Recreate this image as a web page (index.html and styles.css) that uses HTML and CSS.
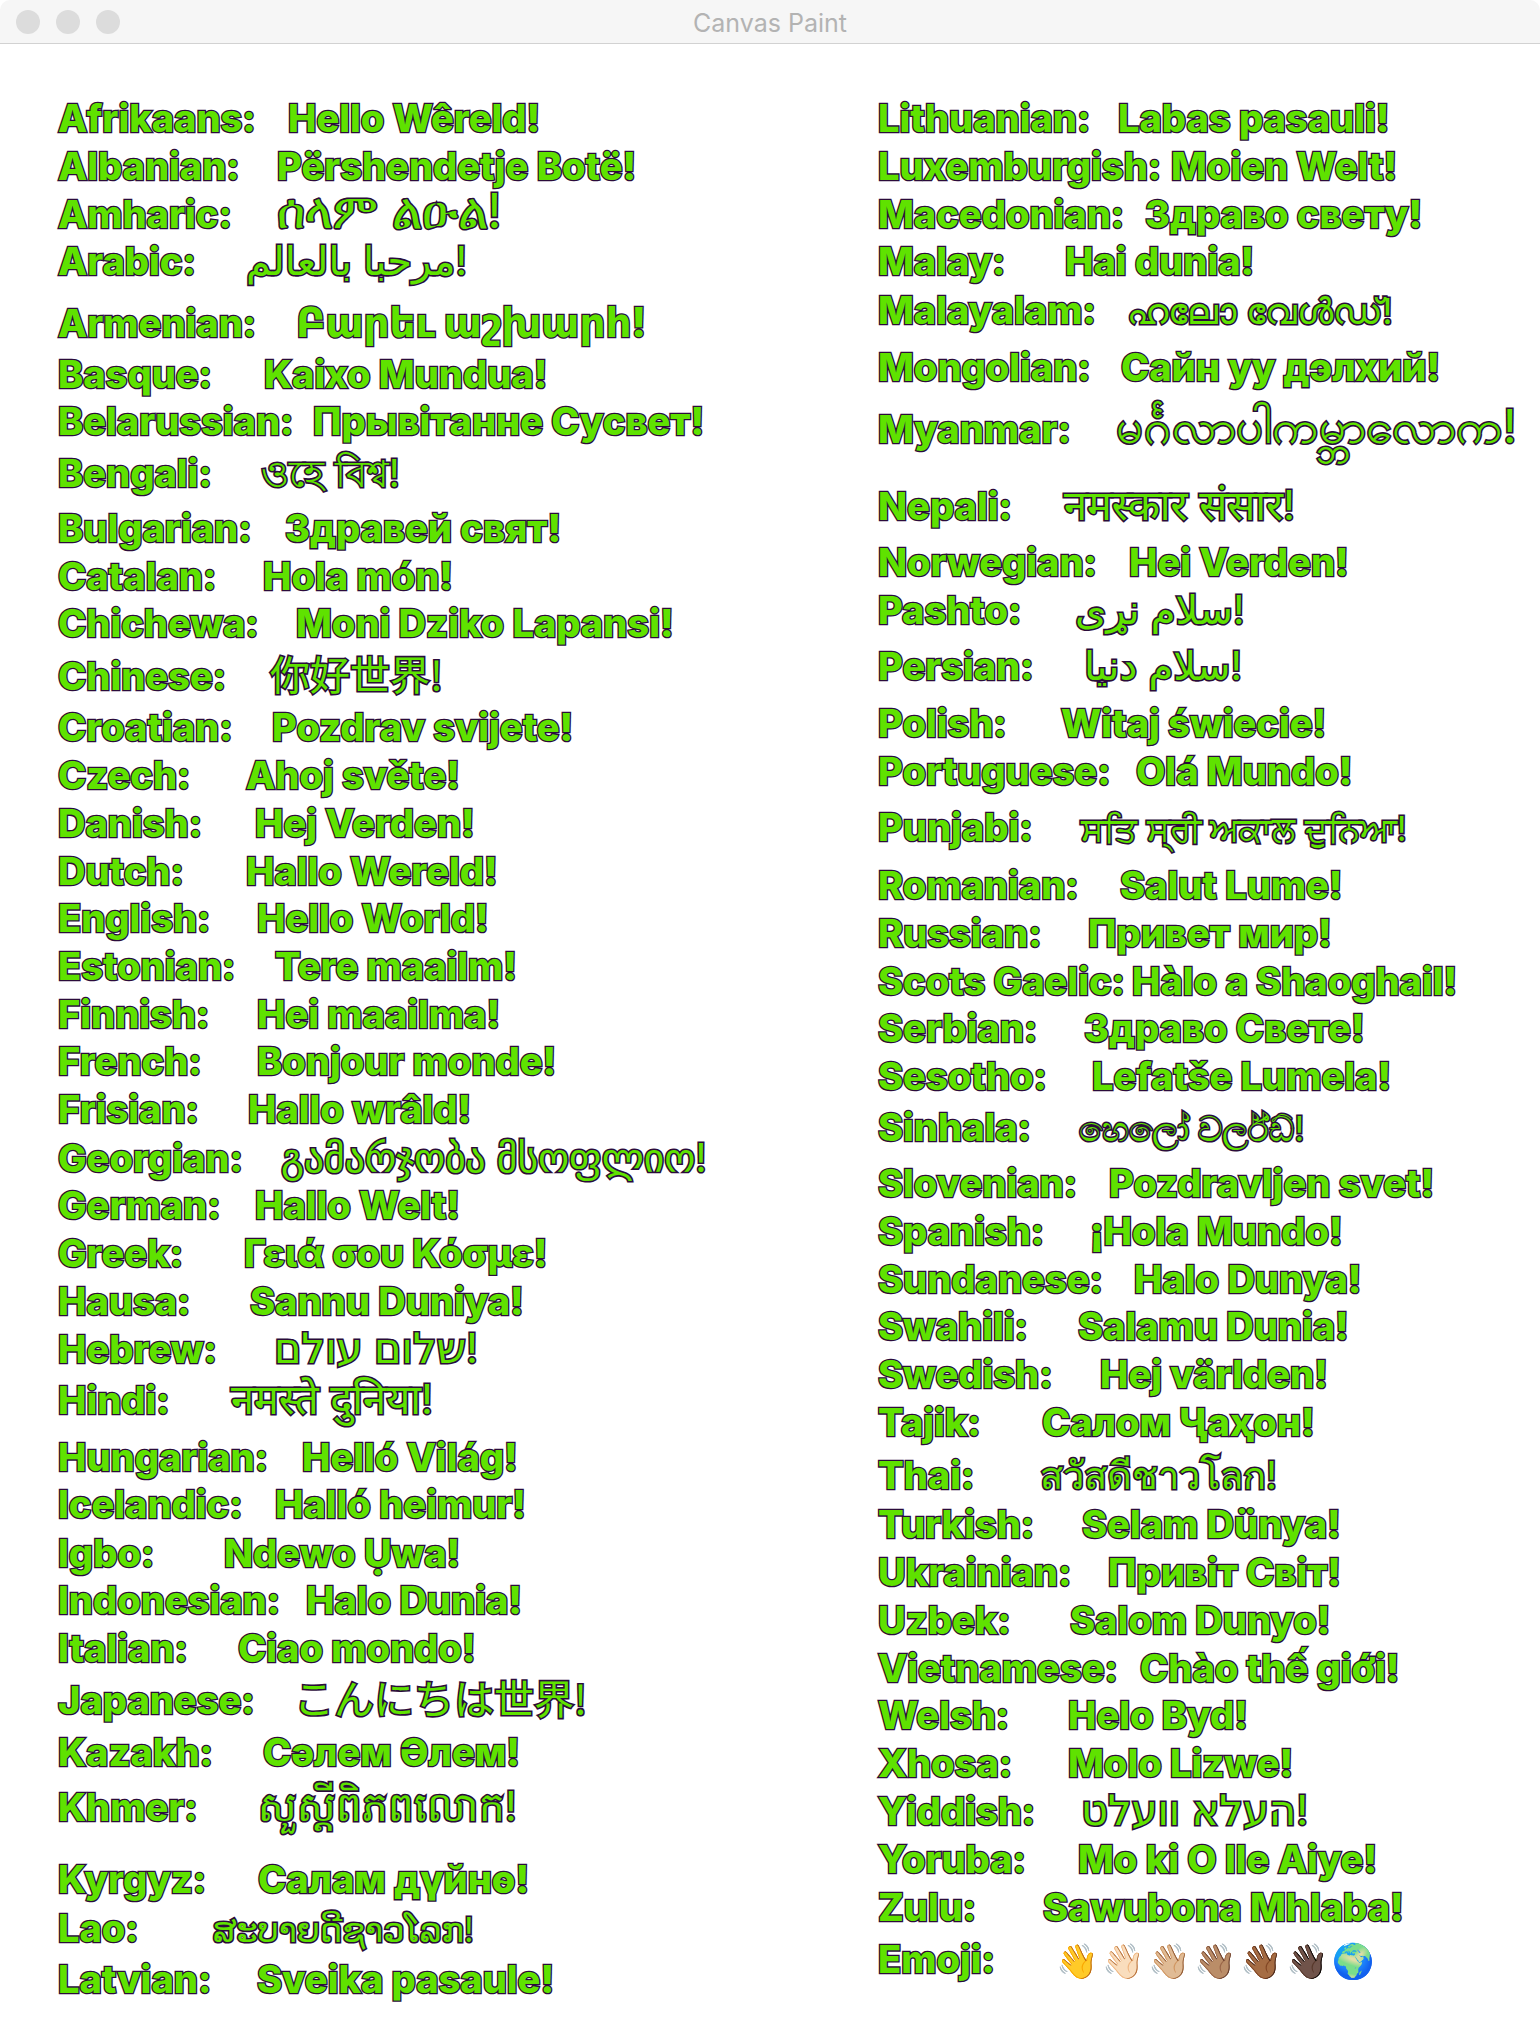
FILE: index.html
```html
<!DOCTYPE html>
<html lang="en">
<head>
<meta charset="utf-8">
<title>Canvas Paint</title>
<link rel="stylesheet" href="styles.css">
</head>
<body>
<header class="bar">
  <div class="lights"><i></i><i></i><i></i></div>
  <div class="title">Canvas Paint</div>
</header>
<main class="cols">
<div class="col">
<p class="h48"><b class="w230">Afrikaans:</b>Hello Wêreld!</p>
<p class="h48"><b class="w219">Albanian:</b>Përshendetje Botë!</p>
<p class="h47"><b class="w219">Amharic:</b><span class="am">ሰላም ልዑል!</span></p>
<p class="h62"><b class="w188">Arabic:</b><span class="ar">مرحبا بالعالم!</span></p>
<p class="h51"><b class="w238">Armenian:</b><span class="hy">Բարեւ աշխարհ!</span></p>
<p class="h47"><b class="w206">Basque:</b>Kaixo Mundua!</p>
<p class="h52"><b class="w255">Belarussian:</b>Прывітанне Сусвет!</p>
<p class="h55"><b class="w203">Bengali:</b><span class="bn">ওহে বিশ্ব!</span></p>
<p class="h48"><b class="w227">Bulgarian:</b>Здравей свят!</p>
<p class="h47"><b class="w205">Catalan:</b>Hola món!</p>
<p class="h53"><b class="w238">Chichewa:</b>Moni Dziko Lapansi!</p>
<p class="h51"><b class="w212">Chinese:</b><span class="zh">你好世界!</span></p>
<p class="h48"><b class="w214">Croatian:</b>Pozdrav svijete!</p>
<p class="h48"><b class="w188">Czech:</b>Ahoj světe!</p>
<p class="h48"><b class="w197">Danish:</b>Hej Verden!</p>
<p class="h47"><b class="w188">Dutch:</b>Hallo Wereld!</p>
<p class="h48"><b class="w199">English:</b>Hello World!</p>
<p class="h48"><b class="w217">Estonian:</b>Tere maailm!</p>
<p class="h47"><b class="w199">Finnish:</b>Hei maailma!</p>
<p class="h48"><b class="w199">French:</b>Bonjour monde!</p>
<p class="h49"><b class="w190">Frisian:</b>Hallo wrâld!</p>
<p class="h47"><b class="w223">Georgian:</b><span class="ka">გამარჯობა მსოფლიო!</span></p>
<p class="h48"><b class="w197">German:</b>Hallo Welt!</p>
<p class="h48"><b class="w186">Greek:</b>Γειά σου Κόσμε!</p>
<p class="h48"><b class="w192">Hausa:</b>Sannu Duniya!</p>
<p class="h51"><b class="w216">Hebrew:</b><span class="he">שלום עולם!</span></p>
<p class="h57"><b class="w173">Hindi:</b><span class="hi">नमस्ते दुनिया!</span></p>
<p class="h47"><b class="w244">Hungarian:</b>Helló Világ!</p>
<p class="h49"><b class="w217">Icelandic:</b>Halló heimur!</p>
<p class="h47"><b class="w166">Igbo:</b>Ndewo Ụwa!</p>
<p class="h48"><b class="w248">Indonesian:</b>Halo Dunia!</p>
<p class="h52"><b class="w180">Italian:</b>Ciao mondo!</p>
<p class="h52"><b class="w236">Japanese:</b><span class="zh">こんにちは世界!</span></p>
<p class="h55"><b class="w205">Kazakh:</b>Сәлем Әлем!</p>
<p class="h72"><b class="w200">Khmer:</b><span class="km">សួស្តីពិភពលោក!</span></p>
<p class="h49"><b class="w200">Kyrgyz:</b>Салам дүйнө!</p>
<p class="h51"><b class="w155">Lao:</b><span class="lo">ສະບາຍດີຊາວໂລກ!</span></p>
<p class="h48"><b class="w199">Latvian:</b>Sveika pasaule!</p>
</div>
<div class="col">
<p class="h48"><b class="w240">Lithuanian:</b>Labas pasauli!</p>
<p class="h48"><b class="w293">Luxemburgish:</b>Moien Welt!</p>
<p class="h47"><b class="w267">Macedonian:</b>Здраво свету!</p>
<p class="h49"><b class="w187">Malay:</b>Hai dunia!</p>
<p class="h57"><b class="w249">Malayalam:</b><span class="ml">ഹലോ വേൾഡ്!</span></p>
<p class="h62"><b class="w243">Mongolian:</b>Сайн уу дэлхий!</p>
<p class="h77"><b class="w238">Myanmar:</b><span class="my">မင်္ဂလာပါကမ္ဘာလောက!</span></p>
<p class="h56"><b class="w186">Nepali:</b><span class="hi">नमस्कार संसार!</span></p>
<p class="h48"><b class="w251">Norwegian:</b>Hei Verden!</p>
<p class="h56"><b class="w197">Pashto:</b><span class="ar">سلام نړی!</span></p>
<p class="h57"><b class="w206">Persian:</b><span class="ar">سلام دنیا!</span></p>
<p class="h48"><b class="w183">Polish:</b>Witaj świecie!</p>
<p class="h56"><b class="w258">Portuguese:</b>Olá Mundo!</p>
<p class="h58"><b class="w203">Punjabi:</b><span class="pa">ਸਤਿ ਸ੍ਰੀ ਅਕਾਲ ਦੁਨਿਆ!</span></p>
<p class="h48"><b class="w242">Romanian:</b>Salut Lume!</p>
<p class="h48"><b class="w210">Russian:</b>Привет мир!</p>
<p class="h47"><b class="w254">Scots Gaelic:</b>Hàlo a Shaoghail!</p>
<p class="h48"><b class="w206">Serbian:</b>Здраво Свете!</p>
<p class="h51"><b class="w214">Sesotho:</b>Lefatše Lumela!</p>
<p class="h56"><b class="w201">Sinhala:</b><span class="si">හෙලෝ වර්ල්ඩ්!</span></p>
<p class="h48"><b class="w231">Slovenian:</b>Pozdravljen svet!</p>
<p class="h48"><b class="w212">Spanish:</b>¡Hola Mundo!</p>
<p class="h47"><b class="w256">Sundanese:</b>Halo Dunya!</p>
<p class="h48"><b class="w200">Swahili:</b>Salamu Dunia!</p>
<p class="h48"><b class="w222">Swedish:</b>Hej världen!</p>
<p class="h53"><b class="w164">Tajik:</b>Салом Ҷаҳон!</p>
<p class="h49"><b class="w162">Thai:</b><span class="th">สวัสดีชาวโลก!</span></p>
<p class="h48"><b class="w204">Turkish:</b>Selam Dünya!</p>
<p class="h48"><b class="w230">Ukrainian:</b>Привіт Світ!</p>
<p class="h48"><b class="w192">Uzbek:</b>Salom Dunyo!</p>
<p class="h47"><b class="w262">Vietnamese:</b>Chào thế giới!</p>
<p class="h48"><b class="w190">Welsh:</b>Helo Byd!</p>
<p class="h48"><b class="w190">Xhosa:</b>Molo Lizwe!</p>
<p class="h48"><b class="w203">Yiddish:</b><span class="he">העלא וועלט!</span></p>
<p class="h48"><b class="w200">Yoruba:</b>Mo ki O Ile Aiye!</p>
<p class="h52"><b class="w165">Zulu:</b>Sawubona Mhlaba!</p>
<p class="h48"><b class="w178">Emoji:</b><span class="emoji">👋👋🏻👋🏼👋🏽👋🏾👋🏿🌍</span></p>
</div>
</main>
</body>
</html>
```
FILE: styles.css
```css
html, body { margin: 0; padding: 0; background: #fff; }
body { width: 1540px; height: 2036px; overflow: hidden; }
.bar {
  height: 40px;
  padding-top: 3px;
  background: #f6f6f6;
  border-bottom: 1px solid #d2d2d2;
  border-radius: 10px 10px 0 0;
  display: flex;
  align-items: center;
  justify-content: center;
  position: relative;
}
.lights { position: absolute; left: 16px; top: 10px; display: flex; gap: 16px; }
.lights i { width: 24px; height: 24px; border-radius: 50%; background: #dcdcdc; display: block; }
.title { font: 400 25px Inter, sans-serif; color: #b3b3b3; }
.cols { display: flex; padding: 50px 0 0 58px; }
.col { flex: none; width: 820px; }
.col + .col { width: 662px; }
.col p {
  margin: 0;
  white-space: pre;
  font: 800 38px/48px Inter, "Noto Sans", "DejaVu Sans", "Noto Sans CJK SC", sans-serif;
  color: #5fe200;
  -webkit-text-stroke: 2.6px #2b0b3b;
  paint-order: stroke fill;
}
.col b { display: inline-block; font-weight: inherit; }
.col span { line-height: 0; }
.am, .ar, .bn, .zh, .ka, .he, .hi, .km, .lo, .ml, .my, .pa, .si, .th {
  font-weight: 400;
  -webkit-text-stroke-width: 3.2px;
}
.am { font-size: 48px; }
.ar { font-size: 40px; }
.hy { font-size: 40.5px; }
.bn { font-size: 38px; }
.ka { font-size: 39.5px; }
.he { font-size: 41.5px; }
.hi { font-size: 41.5px; }
.zh { font-family: "Noto Sans CJK SC", sans-serif; font-size: 40px; }
.km { font-size: 40.5px; }
.lo { font-size: 33.5px; }
.ml { font-size: 36px; }
.my { font-size: 47px; }
.pa { font-size: 34px; }
.si { font-size: 33.7px; }
.th { font-size: 38px; }
.emoji { font-size: 34px; letter-spacing: 4px; }

.h47 { height: 47px; }
.h48 { height: 48px; }
.h49 { height: 49px; }
.h51 { height: 51px; }
.h52 { height: 52px; }
.h53 { height: 53px; }
.h55 { height: 55px; }
.h56 { height: 56px; }
.h57 { height: 57px; }
.h58 { height: 58px; }
.h62 { height: 62px; }
.h72 { height: 72px; }
.h77 { height: 77px; }

.w155 { width: 155px; } .w162 { width: 162px; } .w164 { width: 164px; } .w165 { width: 165px; }
.w166 { width: 166px; } .w173 { width: 173px; } .w178 { width: 178px; } .w180 { width: 180px; }
.w183 { width: 183px; } .w186 { width: 186px; } .w187 { width: 187px; } .w188 { width: 188px; }
.w190 { width: 190px; } .w192 { width: 192px; } .w197 { width: 197px; } .w199 { width: 199px; }
.w200 { width: 200px; } .w201 { width: 201px; } .w203 { width: 203px; } .w204 { width: 204px; }
.w205 { width: 205px; } .w206 { width: 206px; } .w210 { width: 210px; } .w212 { width: 212px; }
.w214 { width: 214px; } .w216 { width: 216px; } .w217 { width: 217px; } .w219 { width: 219px; }
.w222 { width: 222px; } .w223 { width: 223px; } .w227 { width: 227px; } .w230 { width: 230px; }
.w231 { width: 231px; } .w236 { width: 236px; } .w238 { width: 238px; } .w240 { width: 240px; }
.w242 { width: 242px; } .w243 { width: 243px; } .w244 { width: 244px; } .w248 { width: 248px; }
.w249 { width: 249px; } .w251 { width: 251px; } .w254 { width: 254px; } .w255 { width: 255px; }
.w256 { width: 256px; } .w258 { width: 258px; } .w262 { width: 262px; } .w267 { width: 267px; }
.w293 { width: 293px; }
```
